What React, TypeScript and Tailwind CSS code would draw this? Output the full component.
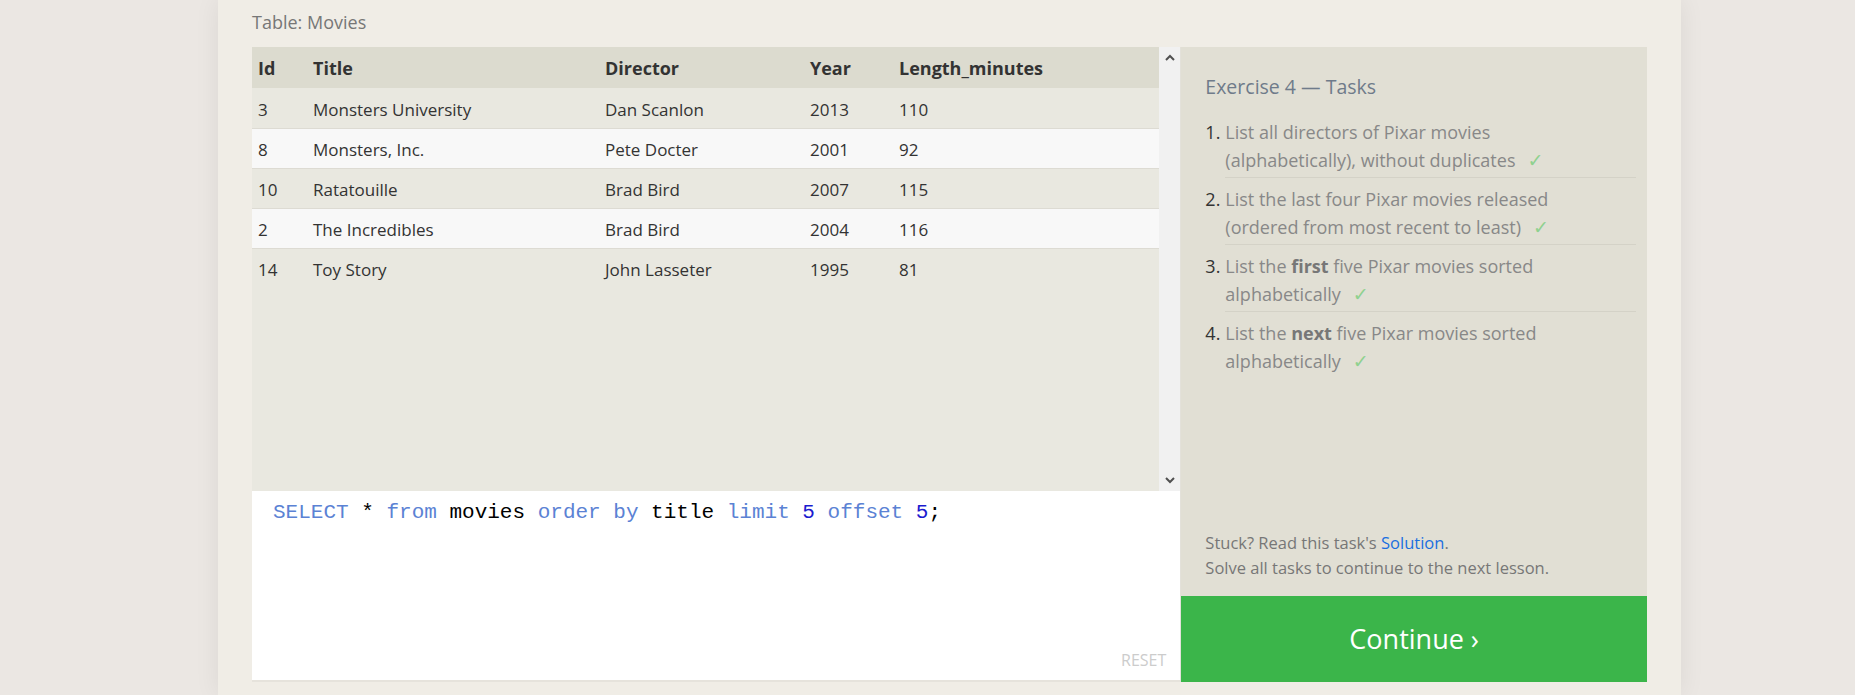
import React from 'react';

const movies = [
  { id: 3, title: 'Monsters University', director: 'Dan Scanlon', year: 2013, length: 110 },
  { id: 8, title: 'Monsters, Inc.', director: 'Pete Docter', year: 2001, length: 92 },
  { id: 10, title: 'Ratatouille', director: 'Brad Bird', year: 2007, length: 115 },
  { id: 2, title: 'The Incredibles', director: 'Brad Bird', year: 2004, length: 116 },
  { id: 14, title: 'Toy Story', director: 'John Lasseter', year: 1995, length: 81 },
];

const tasks: React.ReactNode[] = [
  <>List all directors of Pixar movies (alphabetically), without duplicates</>,
  <>List the last four Pixar movies released (ordered from most recent to least)</>,
  <>List the <b className="font-bold text-[#777]">first</b> five Pixar movies sorted alphabetically</>,
  <>List the <b className="font-bold text-[#777]">next</b> five Pixar movies sorted alphabetically</>,
];

function Chevron({ up }: { up?: boolean }) {
  return (
    <svg width="10" height="7" viewBox="0 0 10 7" className="text-[#505050]">
      <polyline
        points={up ? '1,6 5,2 9,6' : '1,1 5,5 9,1'}
        fill="none"
        stroke="currentColor"
        strokeWidth="2"
      />
    </svg>
  );
}

function MoviesTable() {
  return (
    <div className="flex h-[444px] bg-[#e9e8e0]">
      <div className="flex-1 overflow-hidden">
        <table className="w-full table-fixed border-collapse text-[17px] text-[#333]">
          <colgroup>
            <col className="w-[55px]" />
            <col className="w-[292px]" />
            <col className="w-[205px]" />
            <col className="w-[89px]" />
            <col />
          </colgroup>
          <thead>
            <tr className="h-[41px] bg-[#dcdbcf] text-left">
              <th className="pl-[6px] pt-[2px] text-[18px] font-bold">Id</th>
              <th className="pl-[6px] pt-[2px] text-[18px] font-bold">Title</th>
              <th className="pl-[6px] pt-[2px] text-[18px] font-bold">Director</th>
              <th className="pl-[6px] pt-[2px] text-[18px] font-bold">Year</th>
              <th className="pl-[6px] pt-[2px] text-[18px] font-bold">Length_minutes</th>
            </tr>
          </thead>
          <tbody>
            {movies.map((m, i) => (
              <tr
                key={m.id}
                className={`h-[40px] ${i % 2 === 1 ? 'bg-[#f8f8f8]' : 'bg-[#e9e8e0]'} ${i === movies.length - 1 ? '' : 'border-b border-[#dddbd3]'}`}
              >
                <td className="pl-[6px] pt-[3px]">{m.id}</td>
                <td className="pl-[6px] pt-[3px]">{m.title}</td>
                <td className="pl-[6px] pt-[3px]">{m.director}</td>
                <td className="pl-[6px] pt-[3px]">{m.year}</td>
                <td className="pl-[6px] pt-[3px]">{m.length}</td>
              </tr>
            ))}
          </tbody>
        </table>
      </div>
      <div className="flex w-[21px] flex-col items-center justify-between bg-[#f1f1f1] pt-[7px] pb-[7px]">
        <Chevron up />
        <Chevron />
      </div>
    </div>
  );
}

function Editor() {
  return (
    <div className="flex h-[191px] flex-col border-b-2 border-[#e6e3dc] bg-white pl-[21px] pr-[14px] pt-[10px] pb-[9px]">
      <div className="font-['Liberation_Mono','Courier_New',monospace] text-[21px] leading-[24px] text-black">
        <span className="text-[#5b82d4]">SELECT</span> * <span className="text-[#5b82d4]">from</span> movies{' '}
        <span className="text-[#5b82d4]">order by</span> title <span className="text-[#5b82d4]">limit</span>{' '}
        <span className="text-[#1b1bcf]">5</span> <span className="text-[#5b82d4]">offset</span>{' '}
        <span className="text-[#1b1bcf]">5</span>;
      </div>
      <div className="mt-auto self-end text-[16px] leading-[22px] text-[#cccccc]">RESET</div>
    </div>
  );
}

function TaskPanel() {
  return (
    <div className="flex w-[467px] flex-col border-l border-[#e3e1da]">
      <div className="flex flex-1 flex-col bg-[#e1dfd4] pl-6 pr-[11px] pt-[27px] pb-[16px]">
        <h2 className="text-[19.5px] leading-[26px] text-[#6f7b8a]">Exercise 4 — Tasks</h2>
        <ol className="mt-[18px]">
          {tasks.map((t, i) => (
            <li
              key={i}
              className={`ml-[20px] flex pb-[3px] text-[18px] leading-[28px] ${i < tasks.length - 1 ? 'border-b border-[#d4d2c7]' : ''} ${i === 0 ? '' : 'pt-[7px]'}`}
            >
              <span className="-ml-[20px] w-[20px] shrink-0 text-[#333]">{i + 1}.</span>
              <span className="max-w-[365px] text-[#888]">
                {t}
                <span className="ml-[12px] font-['DejaVu_Sans',sans-serif] text-[19px] leading-[20px] text-[#8fd18f]">✓</span>
              </span>
            </li>
          ))}
        </ol>
        <div className="mt-auto text-[16.5px] leading-[25px] text-[#777]">
          <p>
            Stuck? Read this task's <span className="text-[#1a6fe0]">Solution</span>.
          </p>
          <p>Solve all tasks to continue to the next lesson.</p>
        </div>
      </div>
      <button className="flex h-[86px] items-center justify-center bg-[#3bb54a] text-[27px] text-white">
        Continue ›
      </button>
    </div>
  );
}

export default function App() {
  return (
    <div className="min-h-[695px] overflow-hidden bg-[#ebe7e3] font-['Open_Sans',sans-serif]">
      <div className="ml-[218px] min-h-[695px] w-[1463px] bg-[#f0ede6] px-[34px] pt-[9px] shadow-[0_0_24px_rgba(0,0,0,0.07)]">
        <div className="mb-3 text-[18px] leading-[26px] text-[#777]">Table: Movies</div>
        <div className="flex">
          <div className="w-[929px]">
            <MoviesTable />
            <Editor />
          </div>
          <TaskPanel />
        </div>
      </div>
    </div>
  );
}
